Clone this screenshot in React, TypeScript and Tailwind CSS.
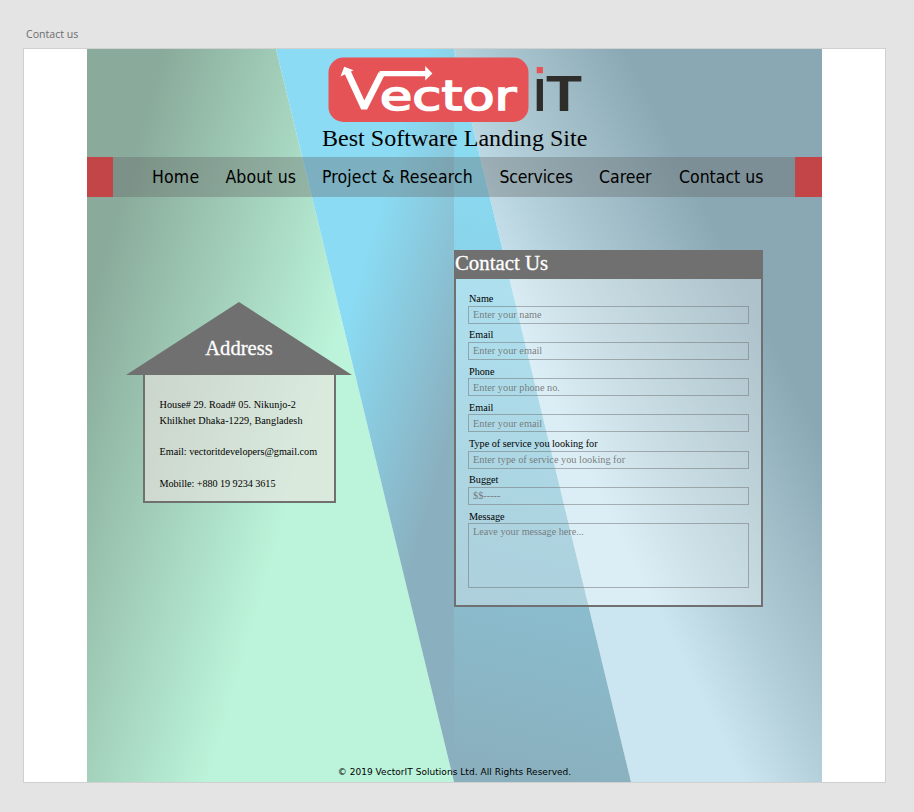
import React from "react";

const serif = "font-['Liberation_Serif',serif]";

function Backdrop() {
  return (
    <svg className="absolute inset-0 h-full w-full" viewBox="87 49 735 733" preserveAspectRatio="none" aria-hidden="true">
      <defs>
        <linearGradient id="mint" gradientUnits="userSpaceOnUse" x1="179" y1="0" x2="414" y2="67.7">
          <stop offset="0" stopColor="#8aab9b" />
          <stop offset="1" stopColor="#bbf4da" />
        </linearGradient>
        <linearGradient id="sky" gradientUnits="userSpaceOnUse" x1="440" y1="0" x2="565" y2="36.2">
          <stop offset="0" stopColor="#8adbf3" />
          <stop offset="1" stopColor="#8ab0bf" />
        </linearGradient>
        <linearGradient id="lake" gradientUnits="userSpaceOnUse" x1="530" y1="180" x2="390" y2="740">
          <stop offset="0" stopColor="#8adaf2" />
          <stop offset="1" stopColor="#8ab0be" />
        </linearGradient>
        <linearGradient id="mist" gradientUnits="userSpaceOnUse" x1="352" y1="0" x2="552" y2="-100">
          <stop offset="0" stopColor="#cce6f1" />
          <stop offset="0.3" stopColor="#b5d1db" />
          <stop offset="1" stopColor="#8aa8b4" />
        </linearGradient>
      </defs>
      <path d="M87 49H276L454 782H87Z" fill="url(#mint)" />
      <path d="M276 49H454V782Z" fill="url(#sky)" />
      <path d="M454 49H822V782H631Z" fill="url(#mist)" />
      <path d="M454 49L631 782H454Z" fill="url(#lake)" />
    </svg>
  );
}

function Logo() {
  return (
    <svg className="block h-[66px] w-[256px]" viewBox="328 57 256 66" role="img" aria-label="Vector iT">
      <defs>
        <linearGradient id="dot" gradientUnits="userSpaceOnUse" x1="0" y1="-70" x2="0" y2="0">
          <stop offset="0.5" stopColor="#e55357" />
          <stop offset="0.5" stopColor="#2f2d29" />
        </linearGradient>
      </defs>
      <rect x="328.5" y="57.5" width="200" height="64.5" rx="15" fill="#e55357" />
      <path d="M347.5 72L364.2 108L381.5 73.7" fill="none" stroke="#fff" strokeWidth="6.6" strokeLinejoin="bevel" />
      <path d="M379.6 73.6H427" fill="none" stroke="#fff" strokeWidth="5.2" />
      <path d="M344.2 66.8L353.6 70.2L340.5 76.6ZM425.2 66L432.4 73.4L425.2 80.6Z" fill="#fff" />
      <text x="379.8" y="110.3" fontSize="41" textLength="136.5" lengthAdjust="spacingAndGlyphs" fill="#fff" stroke="#fff" strokeWidth="1.6" className="font-['DejaVu_Sans',sans-serif]">ector</text>
      <text transform="translate(533.5 111) scale(.75 1)" fontSize="61" fill="url(#dot)" className="font-['Liberation_Sans',sans-serif] font-bold">i</text>
      <text x="546" y="111" fontSize="50" textLength="36" lengthAdjust="spacingAndGlyphs" fill="#2f2d29" className="font-['Liberation_Sans',sans-serif] font-bold">T</text>
    </svg>
  );
}

const links = [
  ["Home", "tracking-[0.2px]"],
  ["About us", "tracking-[0.1px]"],
  ["Project & Research", "tracking-[0.15px]"],
  ["Scervices", "tracking-[-0.2px]"],
  ["Career", "tracking-normal"],
  ["Contact us", "tracking-normal"],
];

function Nav() {
  return (
    <nav className="flex h-[40px] w-full bg-[#606060]/35">
      <div className="w-[26px] shrink-0 bg-[#c34547]" />
      <ul className="ml-[39px] grid grow grid-cols-[73.5px_96.5px_177.5px_99.5px_80px_90px] pt-px font-['DejaVu_Sans_Condensed','DejaVu_Sans',sans-serif] text-[17.5px] leading-[39px] text-black">
        {links.map(([l, tracking]) => (
          <li key={l} className={`whitespace-nowrap ${tracking}`}>{l}</li>
        ))}
      </ul>
      <div className="w-[27px] shrink-0 bg-[#c34547]" />
    </nav>
  );
}

function AddressCard() {
  return (
    <section className={`mt-[105px] ml-[39px] w-[226px] ${serif}`}>
      <h2 className="h-[73px] bg-[#707070] pt-[34px] text-center text-[20.6px] leading-[24px] text-white [-webkit-text-stroke:0.3px_white] [clip-path:polygon(50%_0,100%_100%,0_100%)]">
        Address
      </h2>
      <div className="mx-auto h-[128px] w-[193px] border-[2px] border-t-0 border-[#707070] bg-[#ede3e0]/60 pt-[22px] pl-[15px] text-[10.2px] leading-[15.8px] whitespace-nowrap text-black">
        <p className="tracking-[0.04px]">House# 29. Road# 05. Nikunjo-2</p>
        <p className="tracking-[0.06px]">Khilkhet Dhaka-1229, Bangladesh</p>
        <p className="mt-[15.8px]">Email: vectoritdevelopers@gmail.com</p>
        <p className="mt-[15.8px] tracking-[-0.05px]">Mobille: +880 19 9234 3615</p>
      </div>
    </section>
  );
}

const fields = [
  ["Name", "Enter your name"],
  ["Email", "Enter your email"],
  ["Phone", "Enter your phone no."],
  ["Email", "Enter your email"],
  ["Type of service you looking for", "Enter type of service you looking for"],
  ["Bugget", "$$-----"],
];

function ContactForm() {
  return (
    <form className={`mt-[53px] h-[357px] w-[309px] border-[2.5px] border-t-0 border-[#707070] bg-white/30 ${serif}`}>
      <h2 className="-mx-[2px] h-[29px] bg-[#707070] pl-[1px] text-[20.8px] leading-[25px] text-white [-webkit-text-stroke:0.3px_white]">
        Contact Us
      </h2>
      <div className="mt-[12px] ml-[12px] w-[281px] text-[10.2px] text-black">
        {fields.map(([label, hint], i) => (
          <label key={i} className="block h-[36.3px]">
            <span className="block h-[14.5px] pl-px leading-[16px]">{label}</span>
            <input placeholder={hint} className="block h-[18px] w-full border border-[#707070]/50 bg-transparent px-[4px] text-[10.3px] leading-[16px] placeholder:text-[#707070]/90" />
          </label>
        ))}
        <label className="block">
          <span className="block h-[14.5px] pl-px leading-[16px]">Message</span>
          <textarea placeholder="Leave your message here..." className="block h-[65px] w-full resize-none border border-[#707070]/50 bg-transparent px-[4px] py-[1px] leading-[14px] placeholder:text-[#707070]/90" />
        </label>
      </div>
    </form>
  );
}

export default function App() {
  return (
    <div className="h-[812px] w-[914px] overflow-hidden bg-[#e4e4e4]">
      <p className="h-[48px] pt-[27px] pl-[26px] font-['Open_Sans',sans-serif] text-[10.6px] leading-[14px] text-[#6c6c6c]">Contact us</p>
      <div className="ml-[23px] h-[735px] w-[863px] border border-[#d0d0d0] bg-white px-[63px]">
        <div className="relative h-[733px] w-[735px]">
          <Backdrop />
          <div className="relative flex h-full flex-col">
            <header className="flex h-[108px] flex-col pt-[8px] pl-[241px]">
              <Logo />
              <p className={`-ml-[6px] text-[24px] leading-[30px] tracking-[0.03px] whitespace-nowrap text-black ${serif}`}>Best Software Landing Site</p>
            </header>
            <Nav />
            <main className="flex grow items-start">
              <div className="w-[367px]">
                <AddressCard />
              </div>
              <ContactForm />
            </main>
            <footer className="pb-[4px] text-center font-['DejaVu_Sans',sans-serif] text-[9px] leading-[12px] tracking-[0.04px] text-black">
              © 2019 VectorIT Solutions Ltd. All Rights Reserved.
            </footer>
          </div>
        </div>
      </div>
    </div>
  );
}
